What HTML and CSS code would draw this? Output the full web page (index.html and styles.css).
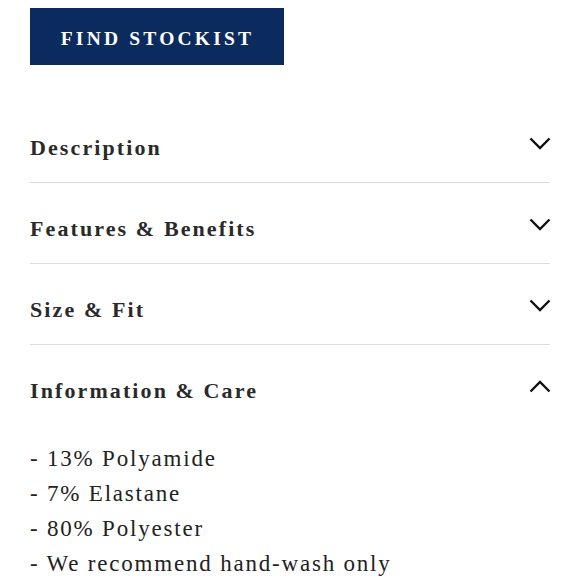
FILE: index.html
```html
<!DOCTYPE html>
<html lang="en">
<head>
<meta charset="utf-8">
<title>Product details</title>
<link rel="stylesheet" href="styles.css">
</head>
<body>
<div class="page">
  <div class="actions">
    <a class="btn-stockist" href="#">FIND STOCKIST</a>
  </div>
  <div class="accordion">
    <div class="acc-row">
      <h3 class="acc-title">Description</h3>
      <svg class="chev" width="22" height="13" viewBox="0 0 22 13"><path d="M1.5 1.5 L11 11 L20.5 1.5" fill="none" stroke="#111" stroke-width="2.4"/></svg>
    </div>
    <div class="acc-row">
      <h3 class="acc-title">Features &amp; Benefits</h3>
      <svg class="chev" width="22" height="13" viewBox="0 0 22 13"><path d="M1.5 1.5 L11 11 L20.5 1.5" fill="none" stroke="#111" stroke-width="2.4"/></svg>
    </div>
    <div class="acc-row">
      <h3 class="acc-title">Size &amp; Fit</h3>
      <svg class="chev" width="22" height="13" viewBox="0 0 22 13"><path d="M1.5 1.5 L11 11 L20.5 1.5" fill="none" stroke="#111" stroke-width="2.4"/></svg>
    </div>
    <div class="acc-row open">
      <h3 class="acc-title">Information &amp; Care</h3>
      <svg class="chev" width="22" height="13" viewBox="0 0 22 13"><path d="M1.5 11.5 L11 2 L20.5 11.5" fill="none" stroke="#111" stroke-width="2.4"/></svg>
    </div>
    <ul class="care-list">
      <li>- 13% Polyamide</li>
      <li>- 7% Elastane</li>
      <li>- 80% Polyester</li>
      <li>- We recommend hand-wash only</li>
    </ul>
  </div>
</div>
</body>
</html>
```
FILE: styles.css
```css
html, body {
  margin: 0;
  padding: 0;
  background: #ffffff;
}
body {
  font-family: "Liberation Serif", "DejaVu Serif", serif;
  color: #222222;
}
.page {
  padding: 8px 30px 0 30px;
}
.actions {
  display: flex;
}
.btn-stockist {
  display: flex;
  align-items: center;
  justify-content: center;
  width: 254px;
  height: 57px;
  padding-top: 4px;
  padding-left: 1px;
  box-sizing: border-box;
  background: #0b2b5f;
  color: #ffffff;
  text-decoration: none;
  font-weight: bold;
  font-size: 19.5px;
  letter-spacing: 3.2px;
}
.accordion {
  margin-top: 37px;
}
.acc-row {
  display: flex;
  justify-content: space-between;
  align-items: flex-start;
  height: 81px;
  box-sizing: border-box;
  padding-top: 35px;
  border-bottom: 1.5px solid #dcdcdc;
}
.acc-row.open {
  border-bottom: none;
  height: 80px;
}
.acc-title {
  margin: 0;
  padding-top: 1px;
  font-size: 22px;
  line-height: 20px;
  font-weight: bold;
  letter-spacing: 2.1px;
  color: #2a2a2a;
}
.chev {
  display: block;
  margin-right: -1px;
}
.care-list {
  list-style: none;
  margin: 0;
  padding: 16px 0 0 0;
}
.care-list li {
  font-size: 23px;
  line-height: 35px;
  letter-spacing: 1.8px;
  color: #222222;
}
```
